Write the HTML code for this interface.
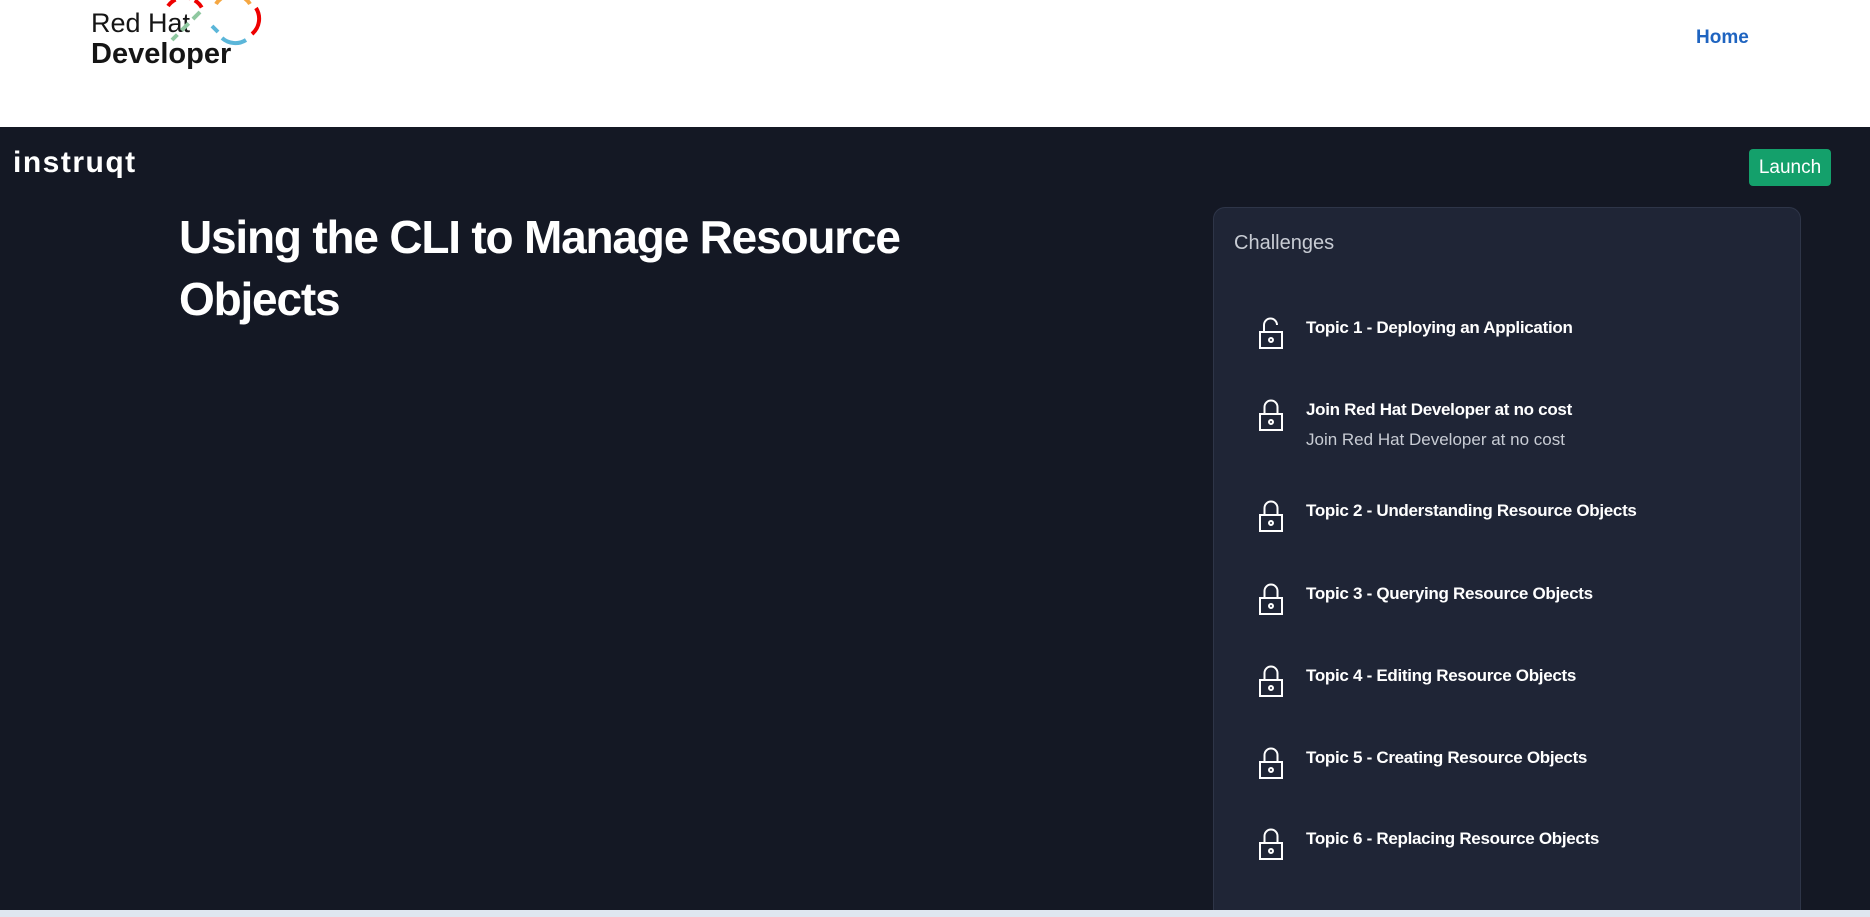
<!DOCTYPE html>
<html><head><meta charset="utf-8"><style>
*{margin:0;padding:0;box-sizing:border-box}
html,body{width:1870px;height:917px;overflow:hidden;background:#141824;font-family:"Liberation Sans",sans-serif}
.hdr{position:absolute;left:0;top:0;width:1870px;height:127px;background:#fff}
.rh{position:absolute;left:91px;top:8px;color:#151515;font-size:27px;line-height:31px}
.rh b{display:block;font-size:29px}
.home{position:absolute;left:1696px;top:27px;color:#1f64c0;font-size:19px;font-weight:bold}
.inst{position:absolute;left:13px;top:146px;color:#fff;font-size:30px;font-weight:bold;letter-spacing:1.5px}
.launch{position:absolute;left:1749px;top:149px;width:82px;height:37px;background:#14a06b;border-radius:4px;color:#fff;font-size:19px;line-height:37px;text-align:center}
h1{position:absolute;left:179px;top:206px;color:#fff;font-size:46px;line-height:62px;font-weight:bold;letter-spacing:-1.2px;width:800px}
.panel{position:absolute;left:1213px;top:207px;width:588px;height:703px;background:#1f2536;border:1px solid #2e3548;border-bottom:none;border-radius:12px 12px 0 0}
.ch{position:absolute;left:20px;top:24px;color:#c8ccd4;font-size:20px}
.it{position:absolute;left:44px;width:520px}
.it svg{position:absolute;left:0;top:-12px}
.it .t{position:absolute;left:48px;top:-10px;color:#fff;font-weight:bold;font-size:17px;white-space:nowrap;letter-spacing:-0.3px}
.it .s{position:absolute;left:48px;top:20px;color:#c8ccd4;font-size:17px;white-space:nowrap}
.bot{position:absolute;left:0;top:910px;width:1870px;height:7px;background:#dfe6f0}
</style></head><body>
<div class="hdr">
 <div class="rh">Red Hat<b>Developer</b></div>
 <svg style="position:absolute;left:160px;top:0" width="110" height="50" viewBox="0 0 110 50">
  <path d="M8 6 A20 20 0 0 1 42 8" stroke="#e00" stroke-width="4" fill="none" stroke-dasharray="10 5"/>
  <path d="M40 12 L12 40" stroke="#8fc8a0" stroke-width="4" stroke-dasharray="10 6"/>
  <path d="M56 4 A20 20 0 0 1 90 4" stroke="#f5a742" stroke-width="4" fill="none"/>
  <path d="M96 8 A20 20 0 0 1 92 34" stroke="#e00" stroke-width="4" fill="none"/>
  <path d="M86 40 A20 20 0 0 1 62 38" stroke="#5bb6d9" stroke-width="4" fill="none"/>
  <path d="M58 32 L52 26" stroke="#5bb6d9" stroke-width="4"/>
 </svg>
 <div class="home">Home</div>
</div>
<div class="inst">instruqt</div>
<div class="launch">Launch</div>
<h1>Using the CLI to Manage Resource Objects</h1>
<div class="panel">
 <div class="ch">Challenges</div>
 <div class="it" style="top:120px"><svg width="26" height="34" viewBox="0 0 26 34" fill="none" stroke="#fff" stroke-width="2"><path d="M6 16 V9 a6.5 6.5 0 0 1 13 0"/><rect x="2" y="16" width="22" height="16"/><circle cx="13" cy="24" r="2"/></svg><div class="t">Topic 1 - Deploying an Application</div></div>
 <div class="it" style="top:202px"><svg width="26" height="34" viewBox="0 0 26 34" fill="none" stroke="#fff" stroke-width="2"><path d="M6.5 16 V9 a6.5 6.5 0 0 1 13 0 V16"/><rect x="2" y="16" width="22" height="16"/><circle cx="13" cy="24" r="2"/></svg><div class="t">Join Red Hat Developer at no cost</div><div class="s">Join Red Hat Developer at no cost</div></div>
 <div class="it" style="top:303px"><svg width="26" height="34" viewBox="0 0 26 34" fill="none" stroke="#fff" stroke-width="2"><path d="M6.5 16 V9 a6.5 6.5 0 0 1 13 0 V16"/><rect x="2" y="16" width="22" height="16"/><circle cx="13" cy="24" r="2"/></svg><div class="t">Topic 2 - Understanding Resource Objects</div></div>
 <div class="it" style="top:386px"><svg width="26" height="34" viewBox="0 0 26 34" fill="none" stroke="#fff" stroke-width="2"><path d="M6.5 16 V9 a6.5 6.5 0 0 1 13 0 V16"/><rect x="2" y="16" width="22" height="16"/><circle cx="13" cy="24" r="2"/></svg><div class="t">Topic 3 - Querying Resource Objects</div></div>
 <div class="it" style="top:468px"><svg width="26" height="34" viewBox="0 0 26 34" fill="none" stroke="#fff" stroke-width="2"><path d="M6.5 16 V9 a6.5 6.5 0 0 1 13 0 V16"/><rect x="2" y="16" width="22" height="16"/><circle cx="13" cy="24" r="2"/></svg><div class="t">Topic 4 - Editing Resource Objects</div></div>
 <div class="it" style="top:550px"><svg width="26" height="34" viewBox="0 0 26 34" fill="none" stroke="#fff" stroke-width="2"><path d="M6.5 16 V9 a6.5 6.5 0 0 1 13 0 V16"/><rect x="2" y="16" width="22" height="16"/><circle cx="13" cy="24" r="2"/></svg><div class="t">Topic 5 - Creating Resource Objects</div></div>
 <div class="it" style="top:631px"><svg width="26" height="34" viewBox="0 0 26 34" fill="none" stroke="#fff" stroke-width="2"><path d="M6.5 16 V9 a6.5 6.5 0 0 1 13 0 V16"/><rect x="2" y="16" width="22" height="16"/><circle cx="13" cy="24" r="2"/></svg><div class="t">Topic 6 - Replacing Resource Objects</div></div>
</div>
<div class="bot"></div>
</body></html>
